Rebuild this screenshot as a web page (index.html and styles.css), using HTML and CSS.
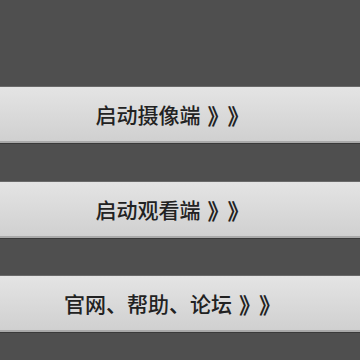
FILE: index.html
```html
<!DOCTYPE html>
<html lang="zh-CN">
<head>
<meta charset="utf-8">
<link rel="stylesheet" href="styles.css">
</head>
<body>
<div class="menu">
  <div class="btn"><span class="label">启动摄像端</span><span class="arrows"><span class="arr">》</span><span class="arr">》</span></span></div>
  <div class="btn"><span class="label">启动观看端</span><span class="arrows"><span class="arr">》</span><span class="arr">》</span></span></div>
  <div class="btn"><span class="label">官网、帮助、论坛</span><span class="arrows"><span class="arr">》</span><span class="arr">》</span></span></div>
</div>
</body>
</html>
```
FILE: styles.css
```css
html, body {
  margin: 0;
  padding: 0;
  background: #4f4f4f;
  height: 100%;
  overflow: hidden;
}
.menu {
  display: flex;
  flex-direction: column;
  gap: 37.5px;
  padding-top: 86px;
}
.btn {
  height: 54px;
  box-sizing: content-box;
  border-top: 1px solid #6a6a6a;
  border-bottom: 2px solid #a9a9a9;
  box-shadow: 0 1px 0 #3a3a3a;
  background: linear-gradient(#e4e4e4, #d0d0d0);
  display: flex;
  align-items: center;
  justify-content: center;
  padding-right: 16px;
  font-family: "Noto Sans CJK SC", sans-serif;
  font-size: 21px;
  color: #222;
  font-weight: 500;
}
.arrows {
  display: flex;
  margin-left: 8px;
  font-weight: 700;
  font-size: 22px;
}
.arr {
  display: flex;
  justify-content: center;
  width: 20px;
}
```
